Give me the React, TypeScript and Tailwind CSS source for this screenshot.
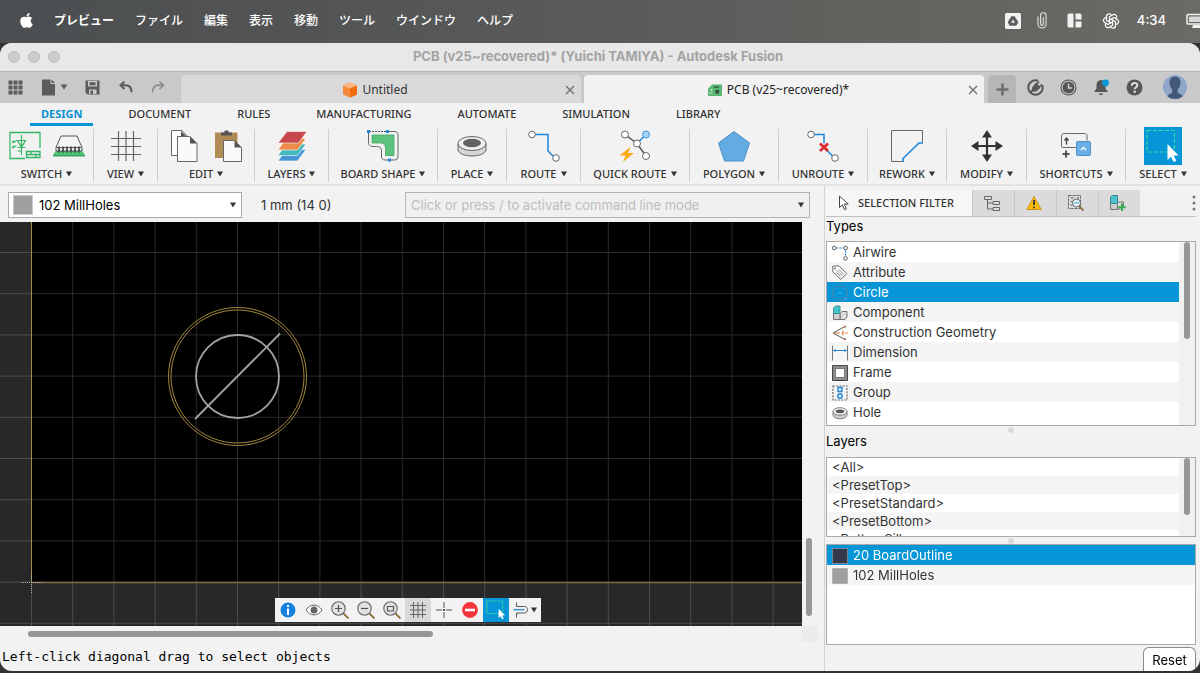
import { useState } from 'react'
import type { ReactNode } from 'react'
import { FaApple } from 'react-icons/fa'
import { TbBrandOpenai } from 'react-icons/tb'

interface IconProps {
  size?: number
  height?: number
  box?: string
  children: ReactNode
}

function Icon({ size = 32, height = size, box, children }: IconProps) {
  return (
    <svg width={size} height={height} viewBox={box ?? `0 0 ${size} ${height}`} fill="none" aria-hidden="true" className="shrink-0">
      {children}
    </svg>
  )
}

function Caret() {
  return (
    <svg width="6" height="6" viewBox="0 0 6 6" aria-hidden="true" className="shrink-0">
      <path d="M0 0.5h6L3 5.5z" fill="#333" />
    </svg>
  )
}

const MENUS = ['ファイル', '編集', '表示', '移動', 'ツール', 'ウインドウ', 'ヘルプ']

function MenuBar() {
  return (
    <header className="flex h-[43px] shrink-0 items-center bg-linear-to-r from-[#4b4e50] via-[#5a5a59] to-[#6c6a65] pb-0.5 pl-5 text-xs font-medium text-white">
      <button aria-label="Apple" className="mr-5 w-3.5">
        <FaApple size={17} className="-ml-0.5" />
      </button>
      <nav className="flex gap-[21px]">
        <button className="font-bold">プレビュー</button>
        {MENUS.map((m) => (
          <button key={m}>{m}</button>
        ))}
      </nav>
      <div className="ml-auto flex items-center">
        <Icon size={16}>
          <rect width="16" height="16" rx="1.5" fill="#f2f2f2" />
          <path d="M6.3 3.2h3.4l3.6 6-2 3.6H4.700l-2-3.600z" fill="#5f5f5d" />
          <path d="M8 6.400l1.900 3.400H6.100z" fill="#f2f2f2" />
        </Icon>
        <span className="ml-4">
          <Icon size={10} height={17}>
            <path d="M1 4.500V12a4 4 0 0 0 8 0V3.500a2.700 2.700 0 0 0-5.400 0V12a1.300 1.300 0 0 0 2.700 0V5" stroke="#e4e4e4" strokeWidth="1.100" />
          </Icon>
        </span>
        <span className="ml-5">
          <Icon size={15}>
            <path d="M0.500 2a1.500 1.500 0 0 1 1.500-1.500h4.500v14H2A1.500 1.500 0 0 1 0.500 13zM8.500 0.500H13A1.500 1.500 0 0 1 14.500 2v4.500h-6zM8.500 8.500h6V13a1.500 1.500 0 0 1-1.500 1.500H8.500z" fill="#f2f2f2" />
          </Icon>
        </span>
        <TbBrandOpenai size={18} strokeWidth={1.6} className="ml-5" />
        <time className="ml-[17px] font-['Inter'] text-[13px]">4:34</time>
        <span className="ml-5 w-3.5 overflow-hidden">
          <Icon size={18}>
            <rect x="1" y="2.500" width="20" height="9.500" rx="1" stroke="#f2f2f2" strokeWidth="1.500" />
            <rect x="3" y="4.500" width="15" height="5.500" fill="#d8d8d8" />
            <path d="M6 16h9l-1-3H7z" fill="#f2f2f2" />
          </Icon>
        </span>
      </div>
    </header>
  )
}

function TitleBar() {
  return (
    <div className="relative flex h-[29px] shrink-0 items-center justify-center border-b border-[#b4b4b4] bg-[#e8e8e8] pr-1">
      <div className="absolute left-2 flex gap-2">
        <i className="size-3 rounded-full border border-[#bdbdbd] bg-[#cbcbcb]" />
        <i className="size-3 rounded-full border border-[#bdbdbd] bg-[#cbcbcb]" />
        <i className="size-3 rounded-full border border-[#bdbdbd] bg-[#cbcbcb]" />
      </div>
      <h1 className="text-[13px] font-bold text-[#a3a3a3]">PCB (v25~recovered)* (Yuichi TAMIYA) - Autodesk Fusion</h1>
    </div>
  )
}

function CloseX() {
  return (
    <Icon size={10}>
      <path d="M1 1l8 8M9 1L1 9" stroke="#6e6e6e" strokeWidth="1.300" />
    </Icon>
  )
}

function DocumentTabs() {
  return (
    <div className="flex h-[31px] shrink-0 bg-[#c9c9c9] pt-[3px] font-['Noto_Sans'] text-xs text-[#333]">
      <div className="flex w-[181px] shrink-0 items-center pb-1 pl-2">
        <button aria-label="Data panel" className="mr-[18px]">
          <Icon size={15}>
            {[0, 5, 10].map((y) => [0, 5, 10].map((x) => <rect key={`${x}${y}`} x={x + 0.500} y={y + 0.500} width="4" height="4" fill="#5c5c5c" />))}
          </Icon>
        </button>
        <button aria-label="File" className="mr-[17px] flex items-center gap-1">
          <Icon size={15} height={17}>
            <path d="M1 0.500h8.500v4.500h4.500v11.500H1z" fill="#5c5c5c" />
            <path d="M10.500 0.500l3.500 3.500h-3.500z" fill="#5c5c5c" />
          </Icon>
          <svg width="8" height="6" viewBox="0 0 8 6" aria-hidden="true">
            <path d="M0.500 0.500h7L4 5.500z" fill="#5c5c5c" />
          </svg>
        </button>
        <button aria-label="Save" className="mr-[19px]">
          <Icon size={15}>
            <path d="M0.500 0.500h14v14H2.500l-2-2z" fill="#5c5c5c" />
            <path d="M3 1h9v5.500H3zM4 9.500h7.500v4.500H4z" fill="#c9c9c9" />
            <path d="M4.500 2.300h6v3h-6zM5.500 10.500h2.500v3.500H5.500z" fill="#5c5c5c" />
          </Icon>
        </button>
        <button aria-label="Undo" className="mr-[18px]">
          <Icon size={14}>
            <path d="M5.500 1.500L1.500 5.200l4 3.800M2 5.200h4.800c3.500 0 5.700 2.300 5.700 7" stroke="#5c5c5c" strokeWidth="2" />
          </Icon>
        </button>
        <button aria-label="Redo">
          <Icon size={14}>
            <path d="M8.500 1.500l4 3.700-4 3.800M12 5.200H7.200C3.700 5.200 1.500 7.500 1.500 12.200" stroke="#8b8b8b" strokeWidth="1.700" />
          </Icon>
        </button>
      </div>
      <div className="flex flex-1 items-center rounded-t bg-[#d9d9d9] pt-0.5">
        <button className="flex flex-1 items-center justify-center gap-1 pl-3">
          <Icon size={16}>
            <path d="M8 0.500l7 3v9l-7 3-7-3v-9z" fill="#f58a3c" />
            <path d="M8 0.500l7 3-7 3-7-3z" fill="#fcb683" />
            <path d="M8 6.500l7-3v9l-7 3z" fill="#f26b0c" />
          </Icon>
          Untitled
        </button>
        <button aria-label="Close Untitled" className="w-6 pl-2">
          <CloseX />
        </button>
      </div>
      <div className="ml-[3px] flex flex-1 items-center rounded-t bg-[#f2f2f2] pt-0.5">
        <button className="flex flex-1 items-center justify-center gap-1 pl-3 text-[#222]">
          <Icon size={16}>
            <path d="M5 2.500h10v11.500H1V7z" fill="#57b773" />
            <path d="M7 5.200h5" stroke="#2d4a37" strokeWidth="1.200" />
            <rect x="8.500" y="8" width="3.500" height="3.500" fill="#39453d" />
            <path d="M2.500 11h3" stroke="#d4efdc" />
            <circle cx="4.500" cy="8" r="0.900" fill="#d4efdc" />
          </Icon>
          PCB (v25~recovered)*
        </button>
        <button aria-label="Close PCB" className="w-6 pl-2">
          <CloseX />
        </button>
      </div>
      <button aria-label="New tab" className="ml-1 flex w-7 items-center justify-center rounded-t bg-[#b6b6b6]">
        <Icon size={13}>
          <path d="M6.500 0.500v12M0.500 6.500h12" stroke="#6e6e6e" strokeWidth="2.600" />
        </Icon>
      </button>
      <div className="flex w-[184px] shrink-0 items-center gap-4 pb-1 pl-[11px]">
        <button aria-label="Extensions">
          <Icon size={17}>
            <path d="M11 1.800A7.200 7.200 0 1 0 15.200 6" stroke="#575757" strokeWidth="2" />
            <path d="M3.500 13.500l3.500-3.500" stroke="#575757" strokeWidth="2" />
            <path d="M6 8.500l3-3.500 3.500 3.500-3.500 3c-2.500 1.200-4-1-3-3zM9.500 5.500l2.500-3M12 8l3-2.500" fill="#575757" stroke="#575757" strokeWidth="1.600" />
          </Icon>
        </button>
        <button aria-label="Job status">
          <Icon size={17}>
            <circle cx="8.500" cy="8.500" r="7.500" stroke="#575757" strokeWidth="1.100" />
            <circle cx="8.500" cy="8.500" r="5.900" fill="#575757" />
            <path d="M8.500 4.500v4.500h3.500" stroke="#d0d0d0" strokeWidth="1.400" />
          </Icon>
        </button>
        <button aria-label="Notifications">
          <Icon size={17}>
            <path d="M8 1c3 0 4.500 2.200 4.500 5v3.500l2.500 3.500H1l2.500-3.500V6C3.500 3.200 5 1 8 1z" fill="#575757" />
            <path d="M6 14.500h4a2 1.700 0 0 1-4 0z" fill="#575757" />
            <circle cx="12.500" cy="4" r="3.400" fill="#0696d7" />
          </Icon>
        </button>
        <button aria-label="Help">
          <Icon size={17}>
            <circle cx="8.500" cy="8.500" r="8" fill="#575757" />
            <path d="M5.800 6.700c0-3.700 5.600-3.500 5.600-.4 0 1.900-2.700 1.900-2.700 3.900" stroke="#e0e0e0" strokeWidth="1.900" />
            <circle cx="8.700" cy="12.800" r="1.200" fill="#e0e0e0" />
          </Icon>
        </button>
        <button aria-label="Account" className="ml-1">
          <Icon size={24}>
            <defs>
              <clipPath id="avatar">
                <circle cx="12" cy="12" r="12" />
              </clipPath>
            </defs>
            <g clipPath="url(#avatar)">
              <rect width="24" height="24" fill="#8ea7cb" />
              <path d="M12 1.500c3.800 0 5.700 2.800 5.500 6.200-.1 3-1.300 5.500-2.700 6.800v2.700c0 1.300 6 2 6 6.800H3.200c0-4.800 6-5.500 6-6.800v-2.700C7.800 13.200 6.600 10.700 6.500 7.700 6.300 4.300 8.200 1.500 12 1.500z" fill="#44587a" />
            </g>
          </Icon>
        </button>
      </div>
    </div>
  )
}

const RIBBON_TABS = ['DESIGN', 'DOCUMENT', 'RULES', 'MANUFACTURING', 'AUTOMATE', 'SIMULATION', 'LIBRARY']

function SelectGlyph({ line = 1.2 }: { line?: number }) {
  return (
    <>
      <path d="M3 3.500h27.500v21.500H3z" stroke="#3fd6a0" strokeWidth={line} strokeDasharray="4 2" />
      <path d="M23.500 17v16l3.500-3.200 2.600 5.200 2.700-1.300-2.600-5.200h4.800z" fill="#fff" />
    </>
  )
}

const GROUPS: { label: string; icons: ReactNode }[] = [
  {
    label: 'SWITCH',
    icons: (
      <>
        <Icon>
          <path d="M31 18V2.500H1v26h15" stroke="#34b565" strokeWidth="1.300" />
          <path d="M12.500 5v20M8.500 10.500h8L12.500 17zM8.500 17.500h8M12.500 21l-4 0M3.500 13l4-2.500M3.500 18l4-2.500M3.500 13l1-2.500M3.500 18l1-2.500" stroke="#34b565" strokeWidth="1.200" />
          <path d="M17.500 21.500H31v6H17.500zM17.500 24.500H31M22 21.500v3M27 24.500v3" stroke="#34b565" strokeWidth="1.300" />
        </Icon>
        <Icon>
          <path d="M5 17.500h22l5 7.500H0z" fill="#4fc274" />
          <path d="M0 25h32v1.500H0z" fill="#39a25c" />
          <path d="M8 6h16l5 11.500v3.500H3v-3.500z" fill="#f4f4f4" stroke="#555" />
          <path d="M3.500 17.500h25" stroke="#555" />
          <path d="M6 16.500v6M10 16.500v6M14 16.500v6M18 16.500v6M22 16.500v6M26 16.500v6" stroke="#444" strokeWidth="1.700" />
        </Icon>
      </>
    ),
  },
  {
    label: 'VIEW',
    icons: (
      <Icon>
        <path d="M8.500 1v30M16 1v30M23.500 1v30M1 8.500h30M1 16.500h30M1 24.500h30" stroke="#666" strokeWidth="1.200" />
      </Icon>
    ),
  },
  {
    label: 'EDIT',
    icons: (
      <>
        <Icon>
          <path d="M9 25.500H3.500V0.500h10.500l6 6.500" fill="#fff" stroke="#666" />
          <path d="M13 1v7h7z" fill="#555" />
          <path d="M9.500 6.500h12.500l7 7v18H9.500z" fill="#fafafa" stroke="#666" />
          <path d="M22 6.500v7h7z" fill="#555" />
        </Icon>
        <Icon>
          <path d="M3 2.500h22.500v25.500H3z" fill="#b18b55" />
          <path d="M9 2.500h3L13 0.500h3l1 2h3v3H9z" fill="#555" />
          <path d="M11.500 10.500h11l7 7v14h-18z" fill="#fafafa" stroke="#666" />
          <path d="M22.500 10.500v7h7z" fill="#555" />
        </Icon>
      </>
    ),
  },
  {
    label: 'LAYERS',
    icons: (
      <Icon>
        <path d="M10 19.500h20L21.500 31H2z" fill="#4795d6" stroke="#fff" strokeWidth="0.600" />
        <path d="M10 14h20l-8.500 11.500H2z" fill="#45b8bd" stroke="#fff" strokeWidth="0.600" />
        <path d="M10 8.500h20L21.500 20H2z" fill="#ec8b4b" stroke="#fff" strokeWidth="0.600" />
        <path d="M11 1.500h20L22.500 13H2z" fill="#c9484b" stroke="#fff" strokeWidth="0.600" />
      </Icon>
    ),
  },
  {
    label: 'BOARD SHAPE',
    icons: (
      <Icon>
        <path d="M1.500 2v10c0 3.500 2 4.500 4.500 4.500h3.500c3.500 0 5 1.500 5 4.500v5c0 3 1 4 4 4H27c3 0 4-1 4-4V5.500C31 2.500 30 1.500 27 1.500h-6" stroke="#666" />
        <path d="M2 1.500h18" stroke="#555" strokeDasharray="2 1" />
        <path d="M5 5h22v20.500h-8.500V18c0-3-1.500-5-5-5H5z" fill="#5cc37c" stroke="#43a865" strokeWidth="0.800" />
        <path d="M0 0h3v3H0zM19 0h3v3h-3zM21 28.500h3v3h-3z" fill="#1c87dd" />
      </Icon>
    ),
  },
  {
    label: 'PLACE',
    icons: (
      <Icon>
        <path d="M2 13.500v6c0 3.700 6.300 6.500 14 6.500s14-2.800 14-6.500v-6z" fill="#d6d6d6" stroke="#666" />
        <ellipse cx="16" cy="13.500" rx="14" ry="7" fill="#f2f2f2" stroke="#666" />
        <ellipse cx="16" cy="13" rx="9" ry="4.200" fill="#636363" />
      </Icon>
    ),
  },
  {
    label: 'ROUTE',
    icons: (
      <Icon>
        <path d="M7 4.500h13v16.500l5.500 5.500" stroke="#1c87dd" strokeWidth="1.500" />
        <circle cx="4" cy="4.500" r="3.300" fill="#fff" stroke="#666" />
        <circle cx="28" cy="28" r="3.300" fill="#fff" stroke="#666" />
      </Icon>
    ),
  },
  {
    label: 'QUICK ROUTE',
    icons: (
      <Icon>
        <path d="M6 4.500l12 9 9 12.500" stroke="#555" strokeWidth="1.500" />
        <path d="M18 13.500l8-8" stroke="#1c87dd" strokeWidth="1.500" />
        <circle cx="6" cy="4.500" r="3.500" fill="#fff" stroke="#666" />
        <circle cx="18" cy="13.500" r="3.500" fill="#fff" stroke="#666" />
        <circle cx="27" cy="26" r="3.500" fill="#fff" stroke="#666" />
        <circle cx="27" cy="4.500" r="3.500" fill="#a6d1f5" stroke="#3c96de" />
        <path d="M11.500 17L0.500 25.500h6L4 32l11-9H9z" fill="#f9aa14" />
      </Icon>
    ),
  },
  {
    label: 'POLYGON',
    icons: (
      <Icon>
        <path d="M16 1.500l15.500 11.500-6 18H6.500l-6-18z" fill="#63ace3" stroke="#4a8fc8" />
      </Icon>
    ),
  },
  {
    label: 'UNROUTE',
    icons: (
      <Icon>
        <path d="M7 4.500h10v9M20 20.500l6 6" stroke="#1c87dd" strokeWidth="1.500" />
        <path d="M13 13.500l8 7.500M21 13.500L13 21" stroke="#da2c2f" strokeWidth="2.800" />
        <circle cx="4" cy="4.500" r="3.300" fill="#fff" stroke="#666" />
        <circle cx="28" cy="28" r="3.300" fill="#fff" stroke="#666" />
      </Icon>
    ),
  },
  {
    label: 'REWORK',
    icons: (
      <Icon>
        <path d="M12.500 31.500H0.500V0.500h31v12" stroke="#666" />
        <path d="M12 32v-3.500L28 13h4" stroke="#1c87dd" strokeWidth="1.600" />
      </Icon>
    ),
  },
  {
    label: 'MODIFY',
    icons: (
      <Icon>
        <path d="M16 5v22M5 16h22" stroke="#333" strokeWidth="2.200" />
        <path d="M16 0l5 7.500H11zM16 32l5-7.500H11zM0 16l7.500-5v10zM32 16l-7.500-5v10z" fill="#333" />
      </Icon>
    ),
  },
  {
    label: 'SHORTCUTS',
    icons: (
      <Icon>
        <path d="M16 17.500H3c-1.300 0-1.500-.5-1.500-1.500V6.500c0-2 .8-3 3-3h20c1.500 0 2.500.5 2.500 2v5" stroke="#666" />
        <path d="M6.500 14.500V9M4.500 10.500l2-2.500 2 2.500" stroke="#444" strokeWidth="1.400" />
        <path d="M6 20.500v7M2.500 24h7" stroke="#555" strokeWidth="2" />
        <rect x="16.500" y="11.500" width="14" height="14" rx="1" fill="#6caee6" stroke="#4a8fc8" />
        <path d="M21 20l2.500-2.500L26 20" stroke="#fff" strokeWidth="1.300" />
      </Icon>
    ),
  },
  { label: 'SELECT', icons: <Icon size={38}><rect width="38" height="38" fill="#0696d7" /><SelectGlyph /></Icon> },
]

function Ribbon() {
  const [tab, setTab] = useState('DESIGN')
  return (
    <div className="shrink-0 border-b-2 border-[#e3e3e3] bg-[#f2f2f2] font-['Noto_Sans'] text-[11px] text-[#333]">
      <div className="flex h-[23px] gap-6 pl-[30px]">
        {RIBBON_TABS.map((t) => (
          <button
            key={t}
            onClick={() => setTab(t)}
            className={
              t === tab
                ? 'border-b-3 border-[#0696d7] px-[11px] pt-0.5 font-bold text-[#0a8fd0]'
                : 'border-b-3 border-transparent px-[11px] pt-0.5 font-medium'
            }
          >
            {t}
          </button>
        ))}
      </div>
      <div className="grid h-[58px] grid-cols-[94fr_64fr_97fr_74fr_109fr_69fr_74fr_109fr_89fr_89fr_79fr_80fr_99fr_74fr] pt-[3px] pb-0.5">
        {GROUPS.map((g) => (
          <div key={g.label} className="flex flex-col items-center border-r border-[#cfcfcf] last:border-r-0">
            <div className="flex h-[34px] items-center justify-center gap-3">{g.icons}</div>
            <button className="mt-[3px] flex items-center gap-1 leading-4 font-medium">
              {g.label}
              <Caret />
            </button>
          </div>
        ))}
      </div>
    </div>
  )
}

function CommandRow() {
  const [layer, setLayer] = useState('102 MillHoles')
  return (
    <div className="flex h-9 shrink-0 items-center pt-0.5 pl-2">
      <div className="relative w-[234px] shrink-0">
        <select
          aria-label="Layer"
          value={layer}
          onChange={(e) => setLayer(e.target.value)}
          className="h-[26px] w-full appearance-none border border-[#a9a9a9] bg-white pl-[30px] text-[13px] text-black"
        >
          <option>102 MillHoles</option>
          <option>20 BoardOutline</option>
        </select>
        <i className="pointer-events-none absolute top-[3px] left-[5px] size-5 border border-[#ccc] bg-[#9f9f9f]" />
        <span className="pointer-events-none absolute top-2.5 right-1.5">
          <Caret />
        </span>
      </div>
      <output className="ml-[19px] w-[144px] shrink-0 pt-0.5 text-[13px] text-[#333]">1 mm (14 0)</output>
      <div className="relative mr-[14px] flex-1">
        <input
          aria-label="Command line"
          placeholder="Click or press / to activate command line mode"
          className="h-[26px] w-full border border-[#b4b4b4] bg-[#f0f0f0] pl-[5px] text-[13px] placeholder:text-[#bdbdbd]"
        />
        <span className="pointer-events-none absolute top-2.5 right-1.5">
          <Caret />
        </span>
      </div>
    </div>
  )
}

function Lens({ children }: { children: ReactNode }) {
  return (
    <Icon size={18}>
      <path d="M12.500 12.500l5 5" stroke="#8a6d3b" strokeWidth="1.800" />
      <circle cx="7.500" cy="7.500" r="6.700" fill="#e2e2e2" stroke="#666" strokeWidth="1.100" />
      {children}
    </Icon>
  )
}

const CANVAS_TOOLS: { name: string; className: string; icon: ReactNode }[] = [
  {
    name: 'Info',
    className: 'bg-[#f2f2f2]',
    icon: (
      <Icon size={16}>
        <circle cx="8" cy="8" r="7.500" fill="#1482dc" />
        <path d="M8 3v2M8 6.500V13" stroke="#fff" strokeWidth="2" />
      </Icon>
    ),
  },
  {
    name: 'Show',
    className: 'bg-[#f2f2f2]',
    icon: (
      <Icon size={18}>
        <path d="M1 9c4-6.500 12-6.500 16 0-4 6.500-12 6.500-16 0z" stroke="#666" fill="#fff" />
        <circle cx="9" cy="9" r="3.500" fill="#666" />
      </Icon>
    ),
  },
  { name: 'Zoom in', className: 'bg-[#f2f2f2]', icon: <Lens><path d="M7.500 4v7M4 7.500h7" stroke="#555" strokeWidth="1.200" /></Lens> },
  { name: 'Zoom out', className: 'bg-[#f2f2f2]', icon: <Lens><path d="M4 7.500h7" stroke="#555" strokeWidth="1.200" /></Lens> },
  { name: 'Fit', className: 'bg-[#f2f2f2]', icon: <Lens><path d="M4.500 5.500h6v4.500h-6z" stroke="#555" strokeWidth="1.200" /></Lens> },
  {
    name: 'Grid',
    className: 'bg-[#d9d9d9]',
    icon: (
      <Icon size={16}>
        <path d="M3.500 0v16M8 0v16M12.500 0v16M0 3.500h16M0 8h16M0 12.500h16" stroke="#666" />
      </Icon>
    ),
  },
  {
    name: 'Origin',
    className: 'bg-[#f2f2f2]',
    icon: (
      <Icon size={16}>
        <path d="M8 0v6M8 10v6M0 8h6M10 8h6" stroke="#555" />
        <rect x="7" y="7" width="2" height="2" fill="#555" />
      </Icon>
    ),
  },
  {
    name: 'Stop',
    className: 'bg-[#f2f2f2]',
    icon: (
      <Icon size={16}>
        <circle cx="8" cy="8" r="7.900" fill="#f5333a" />
        <path d="M3 8h10" stroke="#fff" strokeWidth="2.600" />
      </Icon>
    ),
  },
  { name: 'Select', className: 'bg-[#0696d7]', icon: <Icon size={22} box="0 0 38 38"><SelectGlyph line={2} /></Icon> },
]

function Canvas() {
  return (
    <div className="relative min-w-0 flex-1 overflow-hidden bg-[#282828]">
      <svg width="100%" height="100%" className="absolute inset-0" role="img" aria-label="Board">
        <defs>
          <pattern id="grid" x="31" y="30" width="41.200" height="41.200" patternUnits="userSpaceOnUse">
            <path d="M0.500 0V41.200M0 0.500H41.200" stroke="#fff" strokeOpacity="0.170" />
          </pattern>
        </defs>
        <rect x="31" width="100%" height="361" fill="#000" />
        <rect width="100%" height="100%" fill="url(#grid)" />
        <path d="M31.500 0V361" stroke="#a08a4c" />
        <line x1="31" y1="360.500" x2="100%" y2="360.500" stroke="#7c6d48" strokeWidth="1.500" />
        <path d="M31.500 350v21M21 360.500h21" stroke="#aaa" strokeDasharray="1 1" />
        <circle cx="237.500" cy="154.500" r="69" stroke="#a38638" fill="none" />
        <circle cx="237.500" cy="154.500" r="66.500" stroke="#a38638" fill="none" />
        <circle cx="237.500" cy="154.500" r="41.500" stroke="#a3a3a3" strokeWidth="1.800" fill="none" />
        <path d="M195 197l85-85.500" stroke="#a3a3a3" strokeWidth="1.800" />
      </svg>
      <div className="absolute bottom-1 left-[275px] flex h-6">
        {CANVAS_TOOLS.map((t) => (
          <button key={t.name} aria-label={t.name} className={`flex w-[26px] items-center justify-center ${t.className}`}>
            {t.icon}
          </button>
        ))}
        <button aria-label="Mode" className="flex w-8 items-center justify-center gap-0.5 bg-[#f2f2f2]">
          <Icon size={16}>
            <path d="M3.500 0.500v4h8c4 0 4 6.500 0 6.500h-8v4.500" stroke="#555" />
            <path d="M0.500 7.700h11" stroke="#3c96de" strokeWidth="1.500" />
          </Icon>
          <Caret />
        </button>
      </div>
    </div>
  )
}

const TYPES: { name: string; icon: ReactNode }[] = [
  {
    name: 'Airwire',
    icon: (
      <>
        <path d="M4.500 3h7M13.500 5.500v6" stroke="#1c87dd" strokeDasharray="2 1" strokeWidth="1.200" />
        <circle cx="2.300" cy="3" r="1.800" stroke="#555" fill="#fff" />
        <circle cx="13.500" cy="3" r="1.800" stroke="#555" fill="#fff" />
        <circle cx="13.500" cy="13.500" r="1.800" stroke="#555" fill="#fff" />
      </>
    ),
  },
  {
    name: 'Attribute',
    icon: (
      <>
        <path d="M0.800 1.200l6-.4 8 7.700-6 6-8-8z" stroke="#666" fill="#fff" />
        <path d="M5 5.500l5.500 5.500M7 4.500l5 5M4.500 7.500l4 4" stroke="#666" strokeDasharray="3 0.800" />
        <circle cx="3.200" cy="3.500" r="0.900" fill="#666" />
      </>
    ),
  },
  {
    name: 'Circle',
    icon: (
      <>
        <circle cx="8" cy="8" r="7.300" stroke="#4f86ad" strokeWidth="1.100" />
        <path d="M7 8h2M8 7v2" stroke="#66b8ea" strokeWidth="0.800" />
        <circle cx="13.500" cy="14" r="0.900" fill="#5bb5ee" />
      </>
    ),
  },
  {
    name: 'Component',
    icon: (
      <>
        <path d="M8 8.500l2-2h5v5.500l-2 2.500H8z" fill="#ddd" stroke="#666" strokeWidth="0.900" />
        <path d="M1.500 8.500H8v6H1.500z" fill="#cfcfcf" stroke="#666" strokeWidth="0.900" />
        <path d="M1.500 3l2-2H8v7.500H1.500z" fill="#44c4cd" stroke="#348b92" strokeWidth="0.900" />
      </>
    ),
  },
  {
    name: 'Construction Geometry',
    icon: (
      <>
        <path d="M1 8l11-6M1 8l11 6" stroke="#777" strokeWidth="1.200" />
        <path d="M2 8h6M9.500 8h2M13 8h3M11 5.500v5" stroke="#e07a3c" strokeWidth="1.200" />
        <circle cx="13" cy="1.800" r="1" fill="#a3552c" />
        <circle cx="13" cy="14.200" r="1" fill="#a3552c" />
      </>
    ),
  },
  {
    name: 'Dimension',
    icon: (
      <>
        <path d="M0.500 0.500v15M15.500 0.500v15" stroke="#777" />
        <path d="M2 5.500h12" stroke="#1c87dd" />
        <path d="M1 5.500l2.500-1.500v3zM15 5.500l-2.500-1.500v3z" fill="#1c87dd" />
      </>
    ),
  },
  {
    name: 'Frame',
    icon: (
      <>
        <path d="M0.500 0.500h15v15H0.500z" fill="#8f8f8f" stroke="#444" />
        <path d="M3.500 3.500h9v9h-9z" fill="#fff" stroke="#777" />
      </>
    ),
  },
  {
    name: 'Group',
    icon: (
      <>
        <path d="M1 1h14v14H1z" stroke="#666" strokeDasharray="2 1.200" strokeWidth="1.200" />
        <path d="M6 2.500h4v4H6z" stroke="#1c87dd" strokeWidth="1.400" />
        <circle cx="8" cy="11" r="2.200" stroke="#1c87dd" strokeWidth="1.400" />
      </>
    ),
  },
  {
    name: 'Hole',
    icon: (
      <>
        <path d="M1 6.500v3.500c0 5 14 5 14 0V6.500z" fill="#ccc" stroke="#777" strokeWidth="0.900" />
        <ellipse cx="8" cy="6.500" rx="7" ry="3.800" fill="#eee" stroke="#777" strokeWidth="0.900" />
        <ellipse cx="8" cy="6.300" rx="4.200" ry="1.900" fill="#555" />
      </>
    ),
  },
]

const LAYER_SETS = ['<All>', '<PresetTop>', '<PresetStandard>', '<PresetBottom>', '<BottomSilkscreen>']

const LAYERS = [
  { name: '20 BoardOutline', swatch: 'bg-[#343a49] border-[#6f8797]' },
  { name: '102 MillHoles', swatch: 'bg-[#9f9f9f] border-[#b5b5b5]' },
]

const PANEL_TABS: { name: string; icon: ReactNode }[] = [
  {
    name: 'Design manager',
    icon: (
      <>
        <path d="M0.500 1.500h7v3h-7zM9 6.500h6.500v3H9zM9 12.500h6.500v3H9z" stroke="#666" />
        <path d="M3.500 4.500v9.500H9M3.500 8H9" stroke="#666" />
      </>
    ),
  },
  {
    name: 'Errors',
    icon: (
      <>
        <path d="M8 1.500L15.300 14.500H0.700z" fill="#fbbc12" stroke="#c99518" strokeLinejoin="round" />
        <path d="M8 5v5M8 11.500v1.800" stroke="#333" strokeWidth="1.800" />
      </>
    ),
  },
  {
    name: 'Inspector',
    icon: (
      <>
        <path d="M0.500 0.500h12v13h-12z" stroke="#666" strokeDasharray="3 1" />
        <path d="M2.500 3h3M2.500 6.500h2M2.500 10h2M9 3h2" stroke="#666" strokeWidth="1.200" />
        <path d="M11 11l4.500 4.500" stroke="#8a6d3b" strokeWidth="1.800" />
        <circle cx="8.500" cy="8" r="4" fill="#e9f5fb" stroke="#666" />
        <path d="M6 9l2-2 1 1.500L11 7" stroke="#38a9c9" />
      </>
    ),
  },
  {
    name: 'Add component',
    icon: (
      <>
        <path d="M7.500 7h6v4M7.500 14h3" stroke="#777" />
        <path d="M0.500 8.500h7v6h-7z" fill="#ccc" stroke="#777" />
        <path d="M0.500 2l2-1.500h5v8h-7z" fill="#4cc3cb" stroke="#348b92" />
        <path d="M12 8.500v7.500M8.300 12.200h7.500" stroke="#2fae4d" strokeWidth="2" />
      </>
    ),
  },
]

function SplitHandle() {
  return (
    <div className="flex h-[7px] shrink-0 items-center justify-center">
      <i className="size-1.5 rounded-full bg-[#dadada]" />
    </div>
  )
}

function SidePanel() {
  const [type, setType] = useState('Circle')
  const [layer, setLayer] = useState('20 BoardOutline')
  return (
    <aside className="flex w-[376px] shrink-0 flex-col border-l border-[#d2d2d2] pt-1 pl-px text-[13px] text-[#333]">
      <div className="flex h-[26px] shrink-0">
        <button className="flex w-[146px] items-center gap-2 bg-[#f6f6f6] pl-3 font-['Noto_Sans'] text-[11px] font-medium whitespace-nowrap">
          <Icon size={12} height={16}>
            <path d="M1.500 1v11.500l2.800-2.600 2.200 4.800 1.900-.9-2.200-4.700h4z" stroke="#444" fill="#fff" />
          </Icon>
          SELECTION FILTER
        </button>
        {PANEL_TABS.map((t) => (
          <button key={t.name} aria-label={t.name} className="flex w-[42px] items-center justify-center border-l border-[#c8c8c8] bg-[#dbdbdb] pr-1">
            <Icon size={16}>{t.icon}</Icon>
          </button>
        ))}
        <button aria-label="More" className="mr-1 ml-auto">
          <Icon size={4} height={16}>
            <circle cx="2" cy="2" r="1.500" fill="#777" />
            <circle cx="2" cy="8" r="1.500" fill="#777" />
            <circle cx="2" cy="14" r="1.500" fill="#777" />
          </Icon>
        </button>
      </div>
      <div className="mr-1 flex min-h-0 flex-1 flex-col">
        <h2 className="h-[25px] shrink-0 border-t border-[#c0c0c0] leading-[18px] text-black">Types</h2>
        <div className="flex h-[185px] shrink-0 border border-[#a9a9a9] bg-white">
          <ul className="flex-1 overflow-y-auto [scrollbar-width:none]">
            {TYPES.map((t) => (
              <li key={t.name} className="odd:bg-white even:bg-[#f5f5f5]">
                <button
                  onClick={() => setType(t.name)}
                  className={
                    t.name === type
                      ? 'flex h-5 w-full items-center gap-[5px] bg-[#0696d7] pt-0.5 pl-[5px] text-white'
                      : 'flex h-5 w-full items-center gap-[5px] pt-0.5 pl-[5px]'
                  }
                >
                  <Icon size={16}>{t.icon}</Icon>
                  {t.name}
                </button>
              </li>
            ))}
          </ul>
          <div className="w-4 bg-[#f1f1f1] pl-[5px]">
            <i className="block h-[97px] w-1.5 rounded-full bg-[#979797]" />
          </div>
        </div>
        <SplitHandle />
        <h2 className="h-6 shrink-0 leading-4 text-black">Layers</h2>
        <div className="flex h-20 shrink-0 border border-[#a9a9a9] bg-white">
          <ul className="flex-1 overflow-y-auto [scrollbar-width:none]">
            {LAYER_SETS.map((s) => (
              <li key={s} className="odd:bg-white even:bg-[#f5f5f5]">
                <button className="block h-[18px] w-full pl-[5px] text-left leading-[18px]">{s}</button>
              </li>
            ))}
          </ul>
          <div className="w-4 bg-[#f1f1f1] pl-[5px]">
            <i className="block h-[57px] w-1.5 rounded-full bg-[#979797]" />
          </div>
        </div>
        <SplitHandle />
        <ul className="flex-1 border border-[#a9a9a9] bg-white">
          {LAYERS.map((l) => (
            <li key={l.name} className="even:bg-[#f5f5f5]">
              <button
                onClick={() => setLayer(l.name)}
                className={
                  l.name === layer
                    ? 'flex h-5 w-full items-center gap-[5px] bg-[#0696d7] pt-0.5 pl-[5px] text-white'
                    : 'flex h-5 w-full items-center gap-[5px] pt-0.5 pl-[5px]'
                }
              >
                <i className={`size-4 border ${l.swatch}`} />
                {l.name}
              </button>
            </li>
          ))}
        </ul>
        <button className="mt-0.5 h-6 w-[53px] shrink-0 self-end rounded-t-md border border-b-0 border-[#8a8a8a] bg-white pt-0.5 text-black">
          Reset
        </button>
      </div>
    </aside>
  )
}

export default function App() {
  return (
    <div className="flex h-screen min-w-[1100px] flex-col overflow-hidden bg-[#333] font-['Inter','Noto_Sans_CJK_JP',sans-serif]">
      <MenuBar />
      <div className="mb-0.5 flex min-h-0 flex-1 flex-col overflow-hidden rounded-xl bg-[#f2f2f2]">
        <TitleBar />
        <DocumentTabs />
        <Ribbon />
        <div className="flex min-h-0 flex-1">
          <main className="flex min-w-0 flex-1 flex-col">
            <CommandRow />
            <div className="flex min-h-0 flex-1">
              <Canvas />
              <div className="flex w-[22px] flex-col justify-end pb-2.5 pl-1">
                <i className="h-[78px] w-1.5 rounded-full bg-[#979797]" />
              </div>
            </div>
            <div className="flex h-4 shrink-0 items-center pr-1.5 pl-7">
              <i className="h-1.5 w-[405px] rounded-full bg-[#979797]" />
              <i className="ml-auto size-4 bg-[#ebebeb]" />
            </div>
            <p className="h-[29px] shrink-0 pl-0.5 font-['DejaVu_Sans_Mono'] text-[13px] leading-[30px] text-black">
              Left-click diagonal drag to select objects
            </p>
          </main>
          <SidePanel />
        </div>
      </div>
    </div>
  )
}
